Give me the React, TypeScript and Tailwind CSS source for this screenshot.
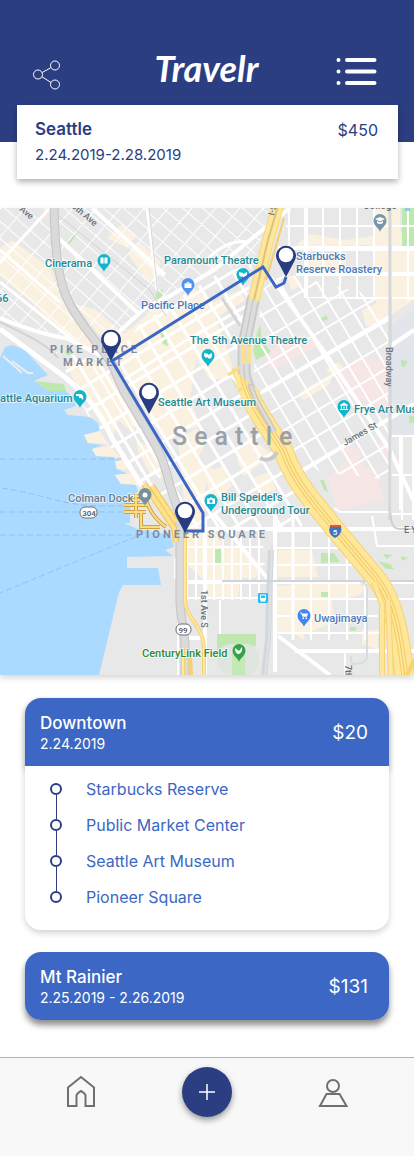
import React from "react";

type Point = [number, number];

const toPoints = (list: Point[]) => list.map((p) => p.join(",")).join(" ");

type GridProps = {
  clip: string;
  angle: number;
  origin: Point;
  across: number;
  down: number;
  width?: number;
};

/* Two families of parallel streets, turned around an origin and clipped to a district. */
function StreetGrid({ clip, angle, origin, across, down, width = 2 }: GridProps) {
  const reach = 420;
  const parts: string[] = [];
  for (let x = -Math.floor(reach / across) * across; x <= reach; x += across) {
    parts.push(`M${x} ${-reach}V${reach}`);
  }
  for (let y = -Math.floor(reach / down) * down; y <= reach; y += down) {
    parts.push(`M${-reach} ${y}H${reach}`);
  }
  return (
    <g clipPath={`url(#${clip})`}>
      <path
        d={parts.join("")}
        transform={`translate(${origin[0]} ${origin[1]}) rotate(${angle})`}
        stroke="#ffffff"
        strokeWidth={width}
        fill="none"
      />
    </g>
  );
}

const districts: Record<string, Point[]> = {
  belltown: [[0, 208], [272, 208], [253, 262], [214, 272], [140, 312], [112, 350], [60, 336], [0, 318]],
  downtown: [[112, 361], [140, 324], [214, 276], [252, 264], [246, 310], [240, 380], [283, 450], [318, 510], [300, 528], [180, 528], [130, 480], [90, 420], [70, 380], [56, 352]],
  firstHill: [[262, 290], [284, 273], [375, 296], [390, 318], [390, 480], [320, 472], [290, 450], [252, 385], [258, 330]],
  capitolHill: [[284, 208], [414, 208], [414, 300], [306, 298], [306, 248], [288, 248]],
  broadway: [[389, 436], [414, 436], [414, 520], [389, 520]],
  southWest: [[186, 530], [262, 530], [266, 580], [258, 600], [186, 600]],
  southEast: [[275, 530], [330, 530], [374, 585], [380, 640], [275, 640]],
};

const beige: Point[][] = [
  [[0, 248], [12, 240], [50, 268], [62, 300], [100, 348], [112, 361], [88, 352], [58, 330], [34, 304], [0, 276]],
  [[107, 238], [122, 224], [136, 236], [127, 248]],
  [[128, 254], [140, 242], [160, 262], [156, 282], [146, 280]],
  [[75, 304], [96, 310], [124, 334], [146, 316], [150, 308], [174, 306], [190, 286], [214, 302], [240, 290], [245, 300], [216, 318], [228, 352], [236, 378], [210, 380], [196, 358], [190, 400], [200, 426], [178, 432], [166, 440], [150, 420], [118, 360]],
  [[62, 360], [100, 362], [135, 410], [134, 434], [118, 420], [112, 440], [96, 415], [80, 390]],
  [[136, 440], [152, 448], [164, 478], [150, 474], [138, 450]],
  [[178, 440], [196, 428], [206, 444], [196, 460], [216, 470], [205, 488], [204, 528], [186, 528], [182, 480]],
  [[236, 448], [250, 440], [262, 446], [272, 456], [258, 466], [244, 476], [238, 462]],
  [[208, 474], [222, 466], [232, 486], [218, 498], [208, 496]],
  [[254, 478], [268, 472], [276, 490], [262, 494]],
  [[184, 528], [214, 528], [222, 546], [240, 548], [262, 566], [256, 578], [240, 578], [238, 598], [206, 598], [204, 580], [184, 562]],
  [[276, 592], [300, 592], [304, 640], [276, 622]],
  [[277, 586], [354, 580], [366, 588], [358, 596], [332, 600], [334, 622], [310, 632], [277, 632]],
  [[278, 550], [312, 550], [318, 577], [278, 577]],
  [[362, 630], [378, 630], [378, 650], [362, 644]],
  [[297, 244], [310, 234], [346, 240], [388, 234], [388, 245], [297, 246]],
  [[310, 276], [306, 256], [346, 252], [346, 273]],
  [[373, 208], [400, 208], [400, 230], [414, 250], [414, 300], [386, 318], [373, 296]],
  [[286, 276], [296, 276], [302, 286], [292, 290]],
  [[362, 310], [384, 300], [384, 322], [366, 326]],
  [[326, 370], [338, 362], [352, 376], [342, 384]],
  [[298, 394], [316, 382], [332, 374], [330, 384], [304, 400]],
];

const pink: Point[][] = [
  [[264, 354], [304, 332], [318, 346], [288, 362], [270, 370]],
  [[335, 374], [366, 357], [388, 364], [388, 416], [372, 402], [340, 392]],
  [[327, 478], [352, 456], [376, 474], [384, 500], [338, 510]],
  [[340, 452], [350, 442], [362, 456], [352, 466]],
  [[378, 445], [388, 440], [388, 464]],
];

const green: Point[][] = [
  [[402, 208], [414, 208], [414, 246], [402, 246]],
  [[321, 553], [334, 553], [340, 562], [321, 563]],
  [[321, 592], [330, 592], [330, 597], [321, 597]],
  [[214, 549], [221, 549], [221, 563], [214, 563]],
  [[217, 634], [256, 634], [256, 646], [217, 652]],
  [[256, 336], [260, 324], [262, 340], [271, 352], [256, 360], [253, 350]],
  [[232, 380], [240, 374], [240, 384], [236, 388]],
  [[320, 319], [326, 315], [328, 319], [322, 322]],
  [[320, 480], [324, 480], [328, 492], [324, 490]],
  [[378, 561], [390, 564], [394, 569], [386, 569]],
  [[383, 554], [393, 555], [386, 559]],
  [[401, 556], [408, 558], [402, 561]],
  [[155, 294], [163, 289], [162, 296], [157, 300]],
  [[160, 332], [166, 335], [168, 346], [163, 344]],
  [[66, 350], [72, 348], [72, 355], [66, 355]],
  [[66, 242], [76, 233], [77, 235], [69, 244]],
  [[51, 268], [57, 266], [58, 273]],
  [[350, 627], [356, 627], [356, 631], [350, 631]],
  [[401, 360], [408, 361], [405, 367], [401, 366]],
  [[409, 416], [414, 416], [414, 423], [409, 423]],
];

const water: Point[] = [
  [0, 358], [5, 347], [12, 345], [25, 350], [34, 360], [48, 375], [34, 381], [48, 391], [66, 391],
  [72, 397], [76, 406], [64, 410], [68, 415], [80, 416], [90, 417], [98, 423], [100, 431], [84, 435], [88, 443],
  [103, 445], [92, 449], [96, 456], [113, 457], [121, 462], [115, 464], [117, 469], [128, 474], [115, 475],
  [121, 484], [136, 485], [138, 492], [131, 496], [130, 516], [130, 523], [124, 523], [138, 529], [170, 535], [174, 547],
  [165, 550], [173, 556], [127, 557], [127, 568], [158, 568], [161, 585], [123, 585], [119, 592], [99, 675], [0, 675],
];

const viaduct =
  "M54 206C55 250 58 276 66 296C76 320 98 342 112 364L123 390L147 430C160 452 164 462 169 482C175 504 180 508 180 530V600C180 620 185 628 185 650V677";
const freewayNorth = "M278 206L268 240L254 300";
const freewayMiddle = "M254 296L244 345L244 372C246 392 262 408 270 426";
const freewaySouth = "M242 366C244 400 272 430 284 452C296 486 318 506 334 528L376 578C396 604 400 640 405 677";
const ferryRamps =
  "M136 494V518M124 505H148M124 512H146M134 496H146M126 500H140M141 512V527H160M146 500C150 512 156 520 166 527";

function Streets() {
  return (
    <g fill="none" stroke="#ffffff">
      <path strokeWidth="4" d="M52 232L140 315M92 208L165 275M0 318C30 330 50 336 66 338L112 361" />
      <path strokeWidth="3" d="M0 282L78 344M0 250L60 302M50 208L0 262" />
      <path strokeWidth="4" d="M110 340L145 308L168 297L214 270L250 240L290 208" />
      <path strokeWidth="3" d="M147 208L157 290M250 304L190 338L120 382" />
      <path strokeWidth="3" d="M205 262Q226 238 250 242" />
      <path strokeWidth="4" d="M254 258L278 287L330 360L390 450L414 502M300 472L414 404" />
      <path strokeWidth="5" d="M0 329L66 378C90 398 100 412 112 438L142 486" />
      <path strokeWidth="2" d="M93 366L128 424L160 478" />
      <path strokeWidth="4" d="M278 248H414M296 274H414M389 347L414 330M262 392L390 318M306 208V298" />
      <path strokeWidth="4" d="M205 520V675M275 515V672M215 515L273 585M205 529H414" />
      <path strokeWidth="3" d="M293 515V640" />
      <path strokeWidth="4" d="M186 582H414M278 636L330 675M295 651H414M186 638H204" />
      <path strokeWidth="2" d="M374 599H414M400 436V510M389 436H414M389 475H414" />
      <path strokeWidth="2" d="M175 558V579M178 600V675M345 650V675M372 516L377 546H414M334 508L340 512H390M220 600V634" />
    </g>
  );
}

function Freeways() {
  return (
    <g fill="none">
      <path d={viaduct} stroke="#c4c4c4" strokeWidth="9" />
      <path d={viaduct} stroke="#dadada" strokeWidth="7" />
      <path d={freewayMiddle} stroke="#c9c9c9" strokeWidth="13" />
      <path d={freewayMiddle} stroke="#dddddd" strokeWidth="9" />
      <path d={freewayMiddle} stroke="#c2c2c2" strokeWidth="1" />
      <path d={freewayNorth} stroke="#f8d77c" strokeWidth="12" />
      <path d={freewayNorth} stroke="#fee69a" strokeWidth="10" />
      <path d={freewayNorth} stroke="#dcc27d" strokeWidth="2" />
      <path d="M284 218L266 280" stroke="#f5cf6c" strokeWidth="2" />
      <path d="M243 342V364M249 346V364" stroke="#fde08a" strokeWidth="4" />
      <g clipPath="url(#south-freeway)">
        <path d={freewaySouth} stroke="#f5d375" strokeWidth="20" />
        <path d={freewaySouth} stroke="#fee799" strokeWidth="18" />
        <path d={freewaySouth} stroke="#f3cb66" strokeWidth="7" />
        <path d={freewaySouth} stroke="#fee799" strokeWidth="5" />
        <path d={freewaySouth} stroke="#efc45a" strokeWidth="1" />
      </g>
      <path d="M250 384C256 406 268 418 274 432" stroke="#cfcac0" strokeWidth="6" />
      <path d="M251 386C257 406 268 418 274 432" stroke="#e2e0dc" strokeWidth="2" />
      <path d="M374 582L382 604V675M388 600L391 675" stroke="#f5d275" strokeWidth="6" />
      <path d="M374 582L382 604V675M388 600L391 675" stroke="#fee69a" strokeWidth="4" />
      <path d="M414 660L407 675" stroke="#f5d275" strokeWidth="4" />
      <path d="M242 388L238 391M228 375L240 367" stroke="#f9dc83" strokeWidth="3" />
      <path d="M185 530V602C186 618 204 626 204 650V675M183 648V675M190 655L191 675" stroke="#f4d173" strokeWidth="4" />
      <path d="M185 530V602C186 618 204 626 204 650V675M183 648V675" stroke="#fee89f" strokeWidth="2" />
      <path d="M144 484L162 510L174 528L176 542M152 486L176 522" stroke="#f0c35a" strokeWidth="6" />
      <path d="M144 484L162 510L174 528L176 542M152 486L176 522" stroke="#fee28b" strokeWidth="4" />
      <path d={ferryRamps} stroke="#d3a23e" strokeWidth="4" />
      <path d={ferryRamps} stroke="#fbdc85" strokeWidth="2" />
      <path d="M260 458C268 462 274 458 277 452" stroke="#c9c9c9" strokeWidth="4" />
    </g>
  );
}

function Rails() {
  return (
    <g fill="none">
      <path d="M271 550L269 600L268 640L264 675" stroke="#d3d6da" strokeWidth="6" />
      <path d="M272 545L270 600L269 640L265 675" stroke="#dfe2e5" strokeWidth="2" />
      <path d="M222 581H414" stroke="#cfd4d8" strokeWidth="2" />
      <path d="M390 208V520" stroke="#cdd0d3" strokeWidth="3" />
      <path d="M390 208V520" stroke="#dddfe1" strokeWidth="1" />
      <path d="M360 582Q367 582 367 590V655Q367 664 355 664Q350 664 351 656" stroke="#d9dbdd" strokeWidth="2" />
      <path d="M391 515Q391 529 400 529H414" stroke="#cdd0d3" strokeWidth="2" />
      <path d="M58 215L150 290L166 316" stroke="#d0d3d6" strokeWidth="1" />
      <path d="M149 208L158 296" stroke="#d5d7da" strokeWidth="1" />
      <path d="M0 322C20 332 45 342 58 358" stroke="#cfd2d6" strokeWidth="2" />
      <path d="M222 298L240 326" stroke="#d4d4d4" strokeWidth="3" />
      <g stroke="#93c0ee" strokeDasharray="6 3">
        <path d="M0 459H121" />
        <path d="M2 488C50 496 60 505 100 506H130" />
        <path d="M0 512H124" />
        <path d="M0 535H140L0 593" />
      </g>
    </g>
  );
}

function PlacePin({ x, y, color, children }: { x: number; y: number; color: string; children?: React.ReactNode }) {
  return (
    <g transform={`translate(${x} ${y})`}>
      <path d="M0 11C-1 7 -6.500 5 -6.500 -.5A6.500 6.500 0 1 1 6.500 -.5C6.500 5 1 7 0 11Z" fill={color} />
      <g fill="#ffffff">{children}</g>
    </g>
  );
}

function RoutePin({ x, y }: { x: number; y: number }) {
  return (
    <g transform={`translate(${x} ${y})`}>
      <path d="M0 22L-8.500 6A10 10 0 1 1 8.500 6Z" fill="#283c82" />
      <circle r="7.300" fill="#ffffff" />
    </g>
  );
}

const glyphs = {
  film: <path d="M-3.500 -3.500H3.500V2.500H-3.500ZM-.4 -3.500V2.500H.4V-3.500Z" />,
  masks: <path d="M-4 -3L0 -2V1Q-2 3 -4 0ZM0 -1L4 -3V0Q3 4 0 2Z" />,
  bag: <path d="M-3.500 -1.500H3.500V3H-3.500ZM-2 -1.500Q0 -5 2 -1.500L1 -1.500Q0 -3 -1 -1.500Z" />,
  cart: <path d="M-4 -3.500H-2.500L-2 -2.500H4L3 .8H-1.500L-3 -2.700H-4ZM-1.500 1.500H0V3H-1.500ZM1.500 1.500H3V3H1.500Z" />,
  museum: <path d="M0 -4.500L4 -2V-1.300H-4V-2ZM-3 -.8H-2V1.700H-3ZM-.5 -.8H.5V1.700H-.5ZM2 -.8H3V1.700H2ZM-4 2H4V3H-4Z" />,
  camera: <path fillRule="evenodd" d="M-4 -2.500H-1.700L-1 -3.500H1L1.700 -2.500H4V3H-4ZM-1.600 .2A1.600 1.600 0 1 0 1.600 .2A1.600 1.600 0 1 0 -1.600 .2Z" />,
  fish: <path d="M-4 -3H1Q4 -2 3 3L1 1Q-2 1 -1 -1L-4 -1Z" />,
  cap: <path d="M0 -4L5 -2L0 .5L-5 -2ZM-3 0L0 1.500L3 0V2Q0 4 -3 2Z" />,
  dot: <circle r="2.500" />,
  leaf: <path d="M-4 -3Q-1 -1 0 0L3 -4Q4 1 0 3Q-4 3 -4 -3Z" />,
};

const teal = "#12b5cb";

type Label = { x: number; y: number; text: string; kind: "teal" | "blue" | "slate" | "green" };

const labels: Label[] = [
  { x: 45, y: 267, text: "Cinerama", kind: "teal" },
  { x: 164, y: 264, text: "Paramount Theatre", kind: "teal" },
  { x: 141, y: 309, text: "Pacific Place", kind: "blue" },
  { x: 296, y: 260, text: "Starbucks", kind: "blue" },
  { x: 296, y: 273, text: "Reserve Roastery", kind: "blue" },
  { x: 190, y: 344, text: "The 5th Avenue Theatre", kind: "teal" },
  { x: 0, y: 402, text: "attle Aquarium", kind: "teal" },
  { x: 158, y: 406, text: "Seattle Art Museum", kind: "teal" },
  { x: 354, y: 413, text: "Frye Art Mus", kind: "teal" },
  { x: 68, y: 502, text: "Colman Dock", kind: "slate" },
  { x: 221, y: 501, text: "Bill Speidel's", kind: "teal" },
  { x: 221, y: 514, text: "Underground Tour", kind: "teal" },
  { x: 314, y: 622, text: "Uwajimaya", kind: "blue" },
  { x: 142, y: 657, text: "CenturyLink Field", kind: "green" },
  { x: -4, y: 302, text: "66", kind: "teal" },
];

const labelColor = {
  teal: "fill-[#1f8a92]",
  blue: "fill-[#4a7abb]",
  slate: "fill-[#6b8090]",
  green: "fill-[#2d8a36]",
};

function TripMap() {
  return (
    <svg
      viewBox="0 208 414 467"
      role="img"
      aria-label="Map of Seattle with the route of the trip"
      className="block h-auto w-full font-[Roboto,sans-serif]"
    >
      <defs>
        {Object.entries(districts).map(([name, shape]) => (
          <clipPath id={name} key={name}>
            <polygon points={toPoints(shape)} />
          </clipPath>
        ))}
        <clipPath id="south-freeway">
          <path d="M230 366L250 384L300 420L414 500V675H300L260 450Z" />
        </clipPath>
      </defs>

      <rect y="208" width="414" height="467" fill="#e8e8e8" />
      <polygon points="390,326 414,310 414,436 390,436" fill="#e2e6ea" />
      <g fill="#fbf1e0">
        {beige.map((shape, i) => <polygon key={i} points={toPoints(shape)} />)}
      </g>
      <g fill="#f6e6e6">
        {pink.map((shape, i) => <polygon key={i} points={toPoints(shape)} />)}
      </g>
      <g fill="#bfe8b0">
        {green.map((shape, i) => <polygon key={i} points={toPoints(shape)} />)}
      </g>

      <StreetGrid clip="belltown" angle={41} origin={[52, 232]} across={18} down={13} width={1} />
      <StreetGrid clip="downtown" angle={-31} origin={[166, 440]} across={18} down={22} width={3} />
      <StreetGrid clip="firstHill" angle={-31} origin={[300, 472]} across={16} down={22} width={2} />
      <StreetGrid clip="capitolHill" angle={0} origin={[306, 226]} across={17} down={24} width={2} />
      <StreetGrid clip="broadway" angle={0} origin={[402, 475]} across={11} down={39} width={2} />
      <StreetGrid clip="southWest" angle={0} origin={[205, 564]} across={9} down={17} width={2} />
      <StreetGrid clip="southEast" angle={0} origin={[293, 599]} across={18} down={17} width={2} />

      <polygon points={toPoints(water)} fill="#aadaff" />
      <path d="M405 208h5v3h-5z" fill="#8ccbf5" />
      <path d="M34 381L64 384L66 391L48 391Z" fill="#bfe8b0" />
      <path d="M3 356L22 373M12 361L28 373H33" stroke="#eeeeee" strokeWidth="2" fill="none" />
      <path d="M84 435L100 431L106 444L88 443ZM92 449L110 446L120 457L96 456ZM115 461L130 460L132 470L117 469ZM115 475L132 473L138 484L121 484Z" fill="#fbf1e0" />
      <rect x="217" y="644" width="42" height="31" rx="14" fill="#dfe6df" />
      <rect x="232" y="653" width="13" height="22" fill="#c4e8b8" />

      <Streets />
      <Rails />
      <Freeways />

      <g className="fill-[#7d8ba1] text-[11px] font-bold">
        <text x="50" y="353" className="tracking-[3px]">PIKE PLACE</text>
        <text x="63" y="366" className="tracking-[3px]">MARKET</text>
        <text x="136" y="538" className="tracking-[3px]">PIONEER SQUARE</text>
      </g>
      <text x="172" y="445" className="fill-[#9a9fa8] text-[25px] font-medium tracking-[7px]">Seattle</text>

      <g
        className="text-[11px] font-medium"
        stroke="#ffffff"
        strokeOpacity="0.6"
        strokeWidth="2"
        strokeLinejoin="round"
        paintOrder="stroke"
      >
        {labels.map((l) => (
          <text key={l.text} x={l.x} y={l.y} className={labelColor[l.kind]}>{l.text}</text>
        ))}
      </g>
      <g className="fill-[#66707a] text-[9px] font-medium">
        <text transform="translate(19 210) rotate(40)">Ave</text>
        <text transform="translate(71 207) rotate(40)">5th Ave</text>
        <text x="363" y="209" className="text-[10px]">College</text>
        <text transform="translate(274 216) rotate(-76)">I-5</text>
        <text transform="translate(386 347) rotate(90)">Broadway</text>
        <text transform="translate(345 446) rotate(-30)">James St</text>
        <text transform="translate(201 590) rotate(90)">1st Ave S</text>
        <text transform="translate(345 665) rotate(90)">7th</text>
        <text x="404" y="533">E Y</text>
      </g>

      <PlacePin x={104} y={261} color={teal}>{glyphs.film}</PlacePin>
      <PlacePin x={243} y={275} color={teal}>{glyphs.masks}</PlacePin>
      <PlacePin x={188} y={285} color="#4e95f2">{glyphs.bag}</PlacePin>
      <PlacePin x={208} y={356} color={teal}>{glyphs.masks}</PlacePin>
      <PlacePin x={80} y={397} color={teal}>{glyphs.fish}</PlacePin>
      <PlacePin x={344} y={407} color={teal}>{glyphs.museum}</PlacePin>
      <PlacePin x={211} y={501} color={teal}>{glyphs.camera}</PlacePin>
      <PlacePin x={145} y={495} color="#78909c">{glyphs.dot}</PlacePin>
      <PlacePin x={380} y={221} color="#7698a6">{glyphs.cap}</PlacePin>
      <PlacePin x={304} y={616} color="#4285f4">{glyphs.cart}</PlacePin>
      <PlacePin x={239} y={651} color="#36a345">{glyphs.leaf}</PlacePin>

      <g className="text-[8px] font-medium" textAnchor="middle">
        <rect x="80" y="507" width="17" height="11" rx="5" fill="#ffffff" stroke="#6e6e6e" />
        <text x="89" y="516" fill="#555555">304</text>
        <rect x="176" y="624" width="15" height="11" rx="5" fill="#ffffff" stroke="#6e6e6e" />
        <text x="183" y="633" fill="#555555">99</text>
        <path d="M330 526H341Q343 534 335 538Q327 534 330 526Z" fill="#3d75c4" />
        <path d="M330 525H341V527H330Z" fill="#d65a4c" />
        <text x="335" y="535" fill="#ffffff">5</text>
      </g>
      <g transform="translate(258 593)">
        <rect width="10" height="10" rx="1" fill="#26bdf0" />
        <path fillRule="evenodd" d="M2 1.500H8V7H7L8 8.500H2L3 7H2ZM3 2.500V5H7V2.500Z" fill="#ffffff" />
      </g>

      <path
        d="M286 277L284 283L276 287L263 267L112 361L203 513V531H185"
        fill="none"
        stroke="#3b66c6"
        strokeWidth="3"
      />
      <RoutePin x={286} y={255} />
      <RoutePin x={111} y={339} />
      <RoutePin x={149} y={392} />
      <RoutePin x={185} y={511} />
    </svg>
  );
}

function ShareIcon() {
  return (
    <svg viewBox="0 0 28 30" className="block h-[30px] w-7" fill="none" stroke="#ffffff" strokeWidth="1" aria-hidden="true">
      <circle cx="5" cy="14.500" r="4.500" />
      <circle cx="22" cy="5.500" r="4.500" />
      <circle cx="22" cy="24.500" r="4.500" />
      <path d="M9.200 12.500L17.700 7.800M9 16.800L18 22.500" />
    </svg>
  );
}

function MenuIcon() {
  return (
    <svg viewBox="0 0 42 30" className="block h-[30px] w-[42px]" stroke="#ffffff" strokeWidth="4" strokeLinecap="round" aria-hidden="true">
      <path d="M11 4H38.500M11 15.500H38.500M11 27H38.500" />
      <path d="M2.500 4h.01M2.500 15.500h.01M2.500 27h.01" />
    </svg>
  );
}

function HomeIcon() {
  return (
    <svg viewBox="0 0 30 34" className="block h-[34px] w-[30px]" fill="none" stroke="#707070" strokeWidth="2" aria-hidden="true">
      <path d="M2 31V12.500L15 2L28 12.500V31H19.500V20Q18 17.500 15 16Q12 17.500 10.500 20V31Z" />
    </svg>
  );
}

function ProfileIcon() {
  return (
    <svg viewBox="0 0 30 30" className="block h-[30px] w-[30px]" fill="none" stroke="#707070" strokeWidth="2" aria-hidden="true">
      <circle cx="15" cy="7" r="6" />
      <path d="M8.500 15H21.500L28.500 27H2Z" />
    </svg>
  );
}

type Leg = { title: string; dates: string; cost: string; stops: string[] };

const legs: Leg[] = [
  {
    title: "Downtown",
    dates: "2.24.2019",
    cost: "$20",
    stops: ["Starbucks Reserve", "Public Market Center", "Seattle Art Museum", "Pioneer Square"],
  },
  { title: "Mt Rainier", dates: "2.25.2019 - 2.26.2019", cost: "$131", stops: [] },
];

function LegCard({ leg }: { leg: Leg }) {
  const open = leg.stops.length > 0;
  return (
    <article className={open ? "rounded-2xl shadow-[0_3px_6px_rgba(0,0,0,0.18)]" : "rounded-2xl shadow-[0_5px_6px_rgba(0,0,0,0.45)]"}>
      <header
        className={
          open
            ? "flex min-h-[68px] items-center justify-between rounded-t-2xl bg-[#3c67c4] pt-[2px] pr-[21px] pl-[15px] text-white shadow-[0_4px_6px_rgba(0,0,0,0.25)]"
            : "flex min-h-[68px] items-center justify-between rounded-2xl bg-[#3c67c4] pt-[2px] pr-[21px] pl-[15px] text-white"
        }
      >
        <div>
          <h2 className="text-[17px] leading-[22px] font-medium">{leg.title}</h2>
          <p className="text-sm leading-5">{leg.dates}</p>
        </div>
        <p className="text-[19px] leading-7">{leg.cost}</p>
      </header>
      {open && (
        <ol className="rounded-b-2xl bg-white pt-[5px] pb-[15px]">
          {leg.stops.map((stop, i) => (
            <li key={stop} className="flex h-9 items-center gap-6 pl-[25px] text-base text-[#3c67c4]">
              <span className="flex h-full w-3 flex-col items-center" aria-hidden="true">
                <span className={i === 0 ? "w-px flex-1" : "w-px flex-1 bg-[#2b3e82]"} />
                <span className="size-3 rounded-full border-2 border-[#2b3e82]" />
                <span className={i === leg.stops.length - 1 ? "w-px flex-1" : "w-px flex-1 bg-[#2b3e82]"} />
              </span>
              {stop}
            </li>
          ))}
        </ol>
      )}
    </article>
  );
}

export default function App() {
  return (
    <div className="flex min-h-screen flex-col bg-white font-[Inter,'Noto_Sans',sans-serif]">
      <header className="flex h-[142px] items-start justify-between bg-[#2b3e82] pt-14 pr-9 pl-[33px]">
        <button type="button" aria-label="Share" className="mt-1">
          <ShareIcon />
        </button>
        <h1 className="-mt-2 ml-4 font-[Lato,sans-serif] text-4xl leading-10 font-bold text-white italic">Travelr</h1>
        <button type="button" aria-label="Menu">
          <MenuIcon />
        </button>
      </header>

      <section className="-mt-[37px] mr-4 ml-[17px] flex min-h-[74px] items-start justify-between bg-white pt-3 pr-5 pl-[18px] text-[#2b3e82] shadow-[0_3px_6px_rgba(0,0,0,0.3)]">
        <div>
          <h2 className="text-[17px] leading-6 font-semibold">Seattle</h2>
          <p className="text-[15px] leading-7">2.24.2019-2.28.2019</p>
        </div>
        <p className="text-base leading-[26px]">$450</p>
      </section>

      <div className="mt-[29px] shadow-[0_3px_6px_rgba(0,0,0,0.16)]">
        <TripMap />
      </div>

      <main className="flex flex-col gap-[22px] px-[25px] pt-[23px] pb-[37px]">
        {legs.map((leg) => (
          <LegCard key={leg.title} leg={leg} />
        ))}
      </main>

      <nav className="flex min-h-[99px] flex-1 items-start justify-between border-t border-[#b0b3b0] bg-[#f8f8f8] px-[66px] pt-[9px]" aria-label="Main">
        <a href="#home" aria-label="Home" className="mt-2">
          <HomeIcon />
        </a>
        <button
          type="button"
          aria-label="Add trip"
          className="flex size-[50px] items-center justify-center rounded-full bg-[#2b3e82] shadow-[0_3px_6px_rgba(0,0,0,0.4)]"
        >
          <svg viewBox="0 0 16 16" className="size-4" stroke="#ffffff" strokeWidth="1.5" aria-hidden="true">
            <path d="M8 0V16M0 8H16" />
          </svg>
        </button>
        <a href="#profile" aria-label="Profile" className="mt-3">
          <ProfileIcon />
        </a>
      </nav>
    </div>
  );
}
